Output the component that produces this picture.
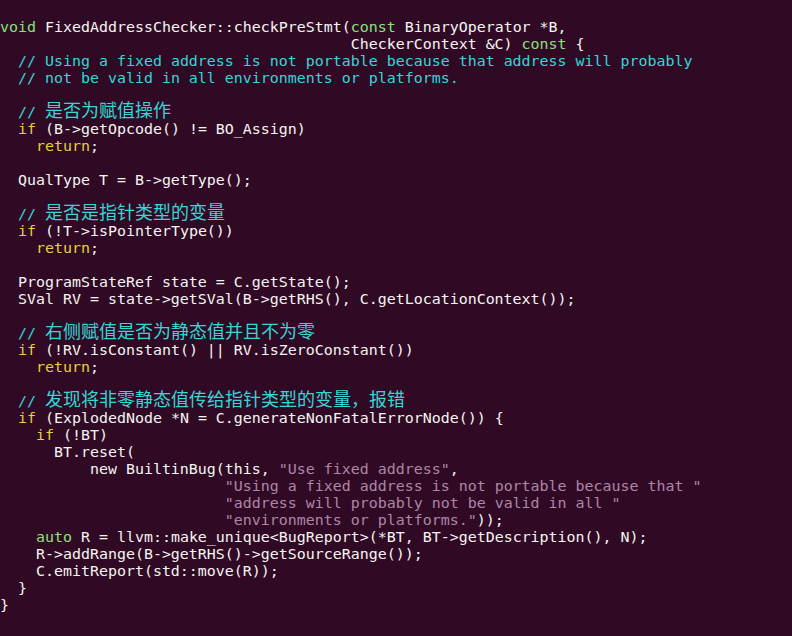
type Tok = { t: string; c?: 'kw' | 'ty' | 'cm' | 'st' | 'cjk' }

const cls: Record<string, string> = {
  kw: 'text-[#e4cf3e]',
  ty: 'text-[#8ae07c]',
  cm: 'text-[#34d6d6]',
  st: 'text-[#ad86a8]',
}

const pad = (n: number) => ' '.repeat(n)

const lines: Tok[][] = [
  [{ t: 'void', c: 'ty' }, { t: ' FixedAddressChecker::checkPreStmt(' }, { t: 'const', c: 'ty' }, { t: ' BinaryOperator *B,' }],
  [{ t: pad(39) + 'CheckerContext &C) ' }, { t: 'const', c: 'ty' }, { t: ' {' }],
  [{ t: '  ' }, { t: '// Using a fixed address is not portable because that address will probably', c: 'cm' }],
  [{ t: '  ' }, { t: '// not be valid in all environments or platforms.', c: 'cm' }],
  [],
  [{ t: '  ' }, { t: '// ', c: 'cm' }, { t: '是否为赋值操作', c: 'cjk' }],
  [{ t: '  ' }, { t: 'if', c: 'kw' }, { t: ' (B->getOpcode() != BO_Assign)' }],
  [{ t: '    ' }, { t: 'return', c: 'kw' }, { t: ';' }],
  [],
  [{ t: '  QualType T = B->getType();' }],
  [],
  [{ t: '  ' }, { t: '// ', c: 'cm' }, { t: '是否是指针类型的变量', c: 'cjk' }],
  [{ t: '  ' }, { t: 'if', c: 'kw' }, { t: ' (!T->isPointerType())' }],
  [{ t: '    ' }, { t: 'return', c: 'kw' }, { t: ';' }],
  [],
  [{ t: '  ProgramStateRef state = C.getState();' }],
  [{ t: '  SVal RV = state->getSVal(B->getRHS(), C.getLocationContext());' }],
  [],
  [{ t: '  ' }, { t: '// ', c: 'cm' }, { t: '右侧赋值是否为静态值并且不为零', c: 'cjk' }],
  [{ t: '  ' }, { t: 'if', c: 'kw' }, { t: ' (!RV.isConstant() || RV.isZeroConstant())' }],
  [{ t: '    ' }, { t: 'return', c: 'kw' }, { t: ';' }],
  [],
  [{ t: '  ' }, { t: '// ', c: 'cm' }, { t: '发现将非零静态值传给指针类型的变量，报错', c: 'cjk' }],
  [{ t: '  ' }, { t: 'if', c: 'kw' }, { t: ' (ExplodedNode *N = C.generateNonFatalErrorNode()) {' }],
  [{ t: '    ' }, { t: 'if', c: 'kw' }, { t: ' (!BT)' }],
  [{ t: '      BT.reset(' }],
  [{ t: '          new BuiltinBug(this, ' }, { t: '"Use fixed address"', c: 'st' }, { t: ',' }],
  [{ t: pad(25) }, { t: '"Using a fixed address is not portable because that "', c: 'st' }],
  [{ t: pad(25) }, { t: '"address will probably not be valid in all "', c: 'st' }],
  [{ t: pad(25) }, { t: '"environments or platforms."', c: 'st' }, { t: '));' }],
  [{ t: '    ' }, { t: 'auto', c: 'ty' }, { t: ' R = llvm::make_unique<BugReport>(*BT, BT->getDescription(), N);' }],
  [{ t: '    R->addRange(B->getRHS()->getSourceRange());' }],
  [{ t: '    C.emitReport(std::move(R));' }],
  [{ t: '  }' }],
  [{ t: '}' }],
]

function Line({ toks }: { toks: Tok[] }) {
  return (
    <div className="h-[17px] whitespace-pre">
      {toks.map((k, i) =>
        k.c === 'cjk' ? (
          <span key={i} className="text-[#34d6d6] text-[18px] leading-[0px] font-['Noto_Sans_CJK_SC',sans-serif]">
            {k.t}
          </span>
        ) : (
          <span key={i} className={k.c ? cls[k.c] : undefined}>
            {k.t}
          </span>
        )
      )}
    </div>
  )
}

export default function App() {
  return (
    <div className="h-[636px] w-[792px] overflow-hidden bg-[#300a24] pt-[19px] font-['DejaVu_Sans_Mono','Noto_Sans_CJK_SC',monospace] text-[14.95px] leading-[17px] text-[#f4f4f2]">
      {lines.map((toks, i) => (
        <Line key={i} toks={toks} />
      ))}
    </div>
  )
}
